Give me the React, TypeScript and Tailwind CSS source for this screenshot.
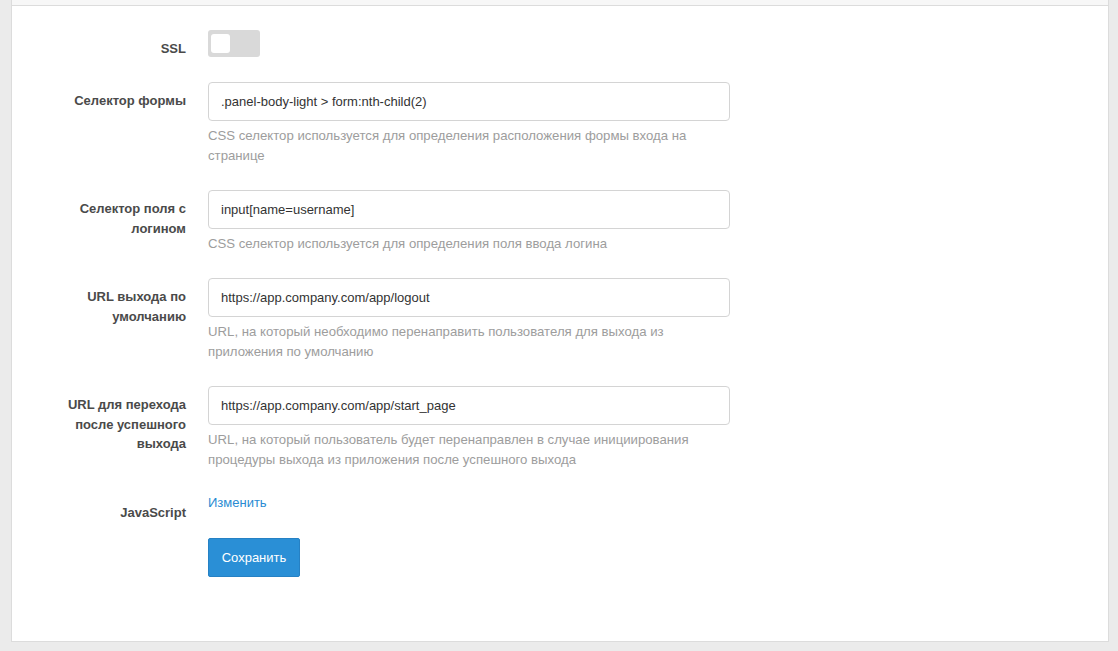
import React from "react"

type Field = {
  label: string[]
  value: string
  help: string[]
}

const fields: Field[] = [
  {
    label: ["Селектор формы"],
    value: ".panel-body-light > form:nth-child(2)",
    help: [
      "CSS селектор используется для определения расположения формы входа на",
      "странице",
    ],
  },
  {
    label: ["Селектор поля с", "логином"],
    value: "input[name=username]",
    help: ["CSS селектор используется для определения поля ввода логина"],
  },
  {
    label: ["URL выхода по", "умолчанию"],
    value: "https://app.company.com/app/logout",
    help: [
      "URL, на который необходимо перенаправить пользователя для выхода из",
      "приложения по умолчанию",
    ],
  },
  {
    label: ["URL для перехода", "после успешного", "выхода"],
    value: "https://app.company.com/app/start_page",
    help: [
      "URL, на который пользователь будет перенаправлен в случае инициирования",
      "процедуры выхода из приложения после успешного выхода",
    ],
  },
]

function Label({ lines }: { lines: string[] }) {
  return (
    <div className="w-[174px] shrink-0 pt-[9px] text-right text-[13px] font-bold leading-[19.5px] text-[#4a4a4a]">
      {lines.map((l) => (
        <div key={l}>{l}</div>
      ))}
    </div>
  )
}

export default function App() {
  return (
    <div
      className="w-[1118px] h-[651px] bg-[#ebebeb] pl-[11px] pr-[9px] overflow-hidden"
      style={{ fontFamily: '"Liberation Sans", Arial, sans-serif' }}
    >
      <div className="h-[642px] bg-white border border-t-0 border-[#dcdcdc]">
        {/* header strip */}
        <div className="h-[6px] bg-[#f7f7f7] border-b border-[#dcdcdc]" />

        <div className="pt-[24px] flex flex-col">
          {/* SSL toggle */}
          <div className="flex gap-[22px] h-[27px] mb-[25px]">
            <Label lines={["SSL"]} />
            <div className="w-[52px] h-[27px] rounded-[3px] bg-[#d9d9d9] flex items-center pl-[3px] pb-[1px]">
              <div className="w-[19px] h-[19px] rounded-[3px] bg-white" />
            </div>
          </div>

          {fields.map((f) => (
            <div key={f.value} className="flex gap-[22px] mb-[24px]">
              <Label lines={f.label} />
              <div className="flex flex-col">
                <input
                  readOnly
                  value={f.value}
                  className="w-[522px] h-[39px] rounded-[4px] border border-[#d4d4d4] bg-white pl-[12px] text-[13px] text-[#333] outline-none"
                />
                <div className="mt-[5px] text-[13.2px] leading-[20px] text-[#9d9d9d]">
                  {f.help.map((h) => (
                    <div key={h}>{h}</div>
                  ))}
                </div>
              </div>
            </div>
          ))}

          {/* JavaScript */}
          <div className="flex gap-[22px] h-[44px]">
            <Label lines={["JavaScript"]} />
            <a href="#" className="text-[13px] leading-[20px] text-[#2a8bd2] -mt-[1px]">
              Изменить
            </a>
          </div>

          <div className="pl-[196px]">
            <button className="h-[39px] w-[92px] rounded-[2px] bg-[#2a8fd6] border border-[#2681c4] text-[13px] text-white">
              Сохранить
            </button>
          </div>
        </div>
      </div>
    </div>
  )
}
